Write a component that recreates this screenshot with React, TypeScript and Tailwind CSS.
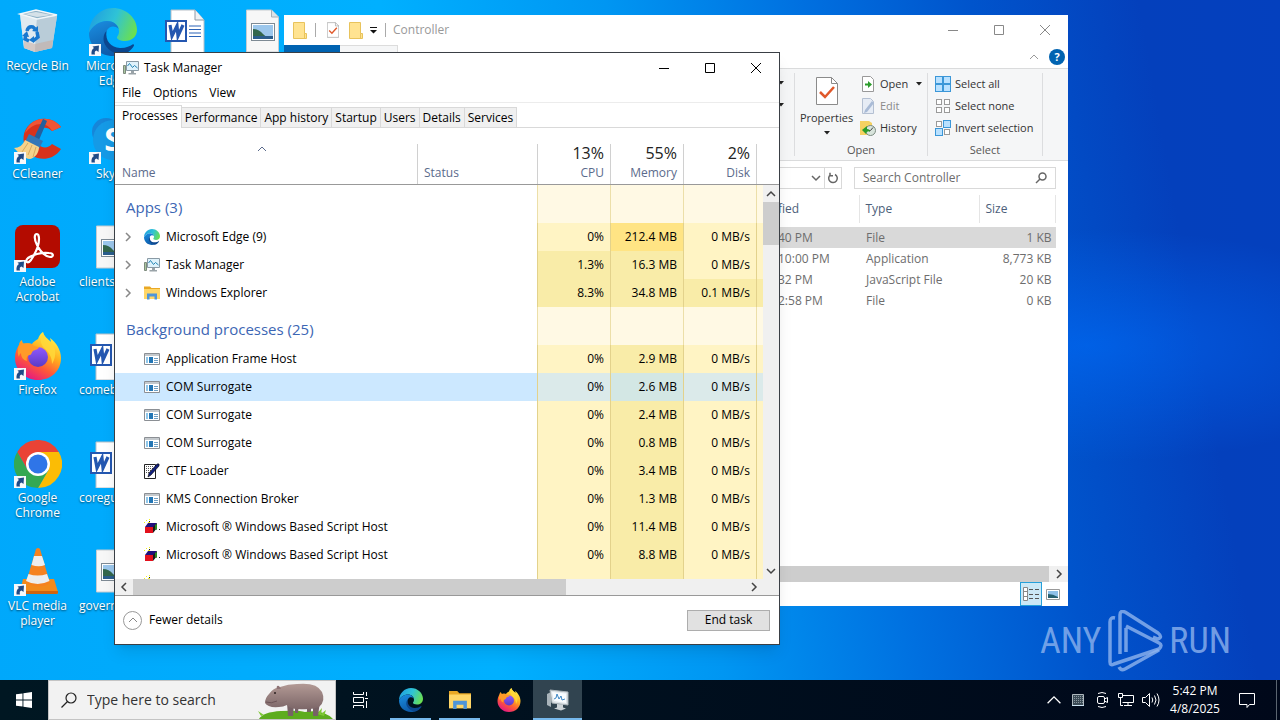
import type { ReactNode } from "react";

type IconProps = { className?: string };

/* ---------- icons ---------- */

function EdgeIcon({ className }: IconProps) {
  return (
    <svg viewBox="0 0 48 48" className={className} aria-hidden="true">
      <defs>
        <linearGradient id="edgeTop" x1="0" y1="0.3" x2="1" y2="0.6">
          <stop offset="0" stopColor="#1f9fe0" />
          <stop offset="0.5" stopColor="#2fc3d6" />
          <stop offset="1" stopColor="#6be04f" />
        </linearGradient>
        <linearGradient id="edgeLeft" x1="0" y1="0" x2="0.4" y2="1">
          <stop offset="0" stopColor="#1b8fe2" />
          <stop offset="1" stopColor="#0d5cab" />
        </linearGradient>
      </defs>
      <path d="M24 0C37 0 48 10 48 21.500c0 7.500-5.500 11.500-12 11.500-5 0-8-1.800-8-3.500 0-1.200 2-2.200 2-6C30 17.500 25 13 18 13 10 13 3 18 0 25 0 11 11 0 24 0Z" fill="url(#edgeTop)" />
      <path d="M0 25C3 18 10 13 18 13c6 0 10.500 3.500 11.700 8C26 17.500 21 18 18.500 21.500 14 28 17 38 25 43c4 2.500 7 3.500 9 2.800C31 47.500 27.500 48 24 48 10.500 48 0 38 0 25Z" fill="url(#edgeLeft)" />
      <path d="M17.500 23C16 33 22 39.500 31 40c6 .2 10-2 12.500-3.500 1.200-.6 2 .4 1.300 1.500C42 42.500 37 46.500 32 47 22 45.500 14.500 38 14.500 31c0-3.500 1.200-6.300 3-8Z" fill="#0b478f" />
    </svg>
  );
}

function RecycleIcon({ className }: IconProps) {
  return (
    <svg viewBox="0 0 48 48" className={className} aria-hidden="true">
      <path d="M6 6 43 8 38 40 21 44 10 40Z" fill="#c3d5df" />
      <path d="M6 6 23 10 21 44 10 40Z" fill="#dfeaf0" />
      <path d="M23 10 43 8 38 40 21 44Z" fill="#b9ccd8" />
      <path d="m10 33 11 3 18-4-1 8-17 4-11-4Z" fill="#c9a799" opacity="0.5" />
      <path d="m6 6 16-4 21 5-20 4Z" fill="#8fb2c7" stroke="#f2f7fa" strokeWidth="1.500" />
      <path d="m10 6 12-2 16 3-15 2Z" fill="#d5e1e8" />
      <g fill="none" stroke="#1878cf" strokeWidth="3.500">
        <path d="M13 23q1-5 6-4l2 2" />
        <path d="m23 24 1 5-5 4" />
        <path d="m15 33-4-2 1-5" />
      </g>
      <path d="m18 23 6 1 0-6ZM20 28v7l-5-3ZM8 28l5-5 2 6Z" fill="#1878cf" />
    </svg>
  );
}

function CCleanerIcon({ className }: IconProps) {
  return (
    <svg viewBox="0 0 48 48" className={className} aria-hidden="true">
      <path d="M47 11C41 3 31 1 23 4 12 8 8 18 10 27c3 13 16 19 28 14 4-2 7-5 9-8l-9-5c-4 5-11 4-14 0-4-6-2-14 4-16 4-1 7 0 10 3Z" fill="#d8321c" />
      <path d="M47 11C41 3 31 1 23 4c-6 2-10 7-12 13 5-6 10-9 16-9 5 0 9 3 11 7Z" fill="#ef5535" />
      <path d="M29 3 33 5 25 24 20 22Z" fill="#235f9e" />
      <path d="m15 18 14 7-4 8-14-7Z" fill="#3277b8" />
      <path d="M11 24 25 31c0 6-4 11-9 12C10 43 4 36 0 32c5 0 9-3 11-8Z" fill="#f5d28b" />
      <path d="m14 27-6 9M18 29l-4 10M22 31l-3 10" stroke="#d8a95e" />
    </svg>
  );
}

function AcrobatIcon({ className }: IconProps) {
  return (
    <svg viewBox="0 0 48 48" className={className} aria-hidden="true">
      <rect x="1" y="1" width="45" height="43" rx="8" fill="#b30b00" />
      <path d="M23 10c-3 0-3 5 0 11s7 11 13 12c4 0 4-4-1-4-8-1-17 2-21 5-4 4 0 6 3 2 4-6 8-15 8-21 0-3-1-5-2-5Z" fill="none" stroke="#fff" strokeWidth="2.200" />
    </svg>
  );
}

function FirefoxIcon({ className }: IconProps) {
  return (
    <svg viewBox="0 0 48 48" className={className} aria-hidden="true">
      <defs>
        <linearGradient id="foxBody" x1="0.8" y1="0.1" x2="0.3" y2="1">
          <stop offset="0" stopColor="#fff14a" />
          <stop offset="0.35" stopColor="#ffae1d" />
          <stop offset="0.65" stopColor="#ff5a36" />
          <stop offset="1" stopColor="#e31587" />
        </linearGradient>
        <linearGradient id="foxGlobe" x1="0" y1="0" x2="0" y2="1">
          <stop offset="0" stopColor="#9059ff" />
          <stop offset="1" stopColor="#5a3bc4" />
        </linearGradient>
      </defs>
      <path d="M29 0c1 5 5 7 8 10 0-2-1-3-1-4 6 4 11 12 11 20 0 13-10 22-23 22S1 38 1 26c0-6 2-10 4-13 0-2 1-4 3-5 0 2 1 3 2 4 3-1 5-1 8 0 1-2 4-4 6-5 1-3 2-5 5-7Z" fill="url(#foxBody)" />
      <circle cx="24" cy="25" r="10" fill="url(#foxGlobe)" />
      <path d="M5 13c4-2 9-2 13-1 1 2 4 3 7 3 0 2-4 3-6 4-2 2-1 4-4 4-2 1-3 3-2 6-4-1-6-4-6-8-1 1-2 2-2 4-2-4-1-9 0-12Z" fill="#ff9a28" />
      <path d="M29 0c1 5 5 7 8 10 5 6 6 14 1 22 0-7-3-12-8-16-4-4-4-11-1-16Z" fill="#ffd83a" opacity="0.85" />
    </svg>
  );
}

function ChromeIcon({ className }: IconProps) {
  return (
    <svg viewBox="0 0 48 48" className={className} aria-hidden="true">
      <path d="M3.200 12A24 24 0 0 1 44.800 12L24 12 13.600 30Z" fill="#ea4335" />
      <path d="M44.800 12A24 24 0 0 1 24 48L34.400 30 24 12Z" fill="#fbbc05" />
      <path d="M24 48A24 24 0 0 1 3.200 12L13.600 30 34.400 30Z" fill="#34a853" />
      <circle cx="24" cy="24" r="12" fill="#fff" />
      <circle cx="24" cy="24" r="9.500" fill="#2f75e8" />
    </svg>
  );
}

function VlcIcon({ className }: IconProps) {
  return (
    <svg viewBox="0 0 48 48" className={className} aria-hidden="true">
      <path d="M9 31h31l4 13q0 2-2 2H8q-2 0-2-2Z" fill="#f28a1c" />
      <path d="M6 43h38v2q0 1-2 1H8q-2 0-2-1Z" fill="#cf6410" />
      <path d="M22 1q2-2 4 0l10 34q-11 7-24 0Z" fill="#f5821f" />
      <path d="M20 8h8l3 9q-6 2.500-13.500 0ZM14.500 26q9 3 18.500 0l2.500 7q-12 6-23.500 0Z" fill="#ededed" />
    </svg>
  );
}

function SkypeIcon({ className }: IconProps) {
  return (
    <svg viewBox="0 0 48 48" className={className} aria-hidden="true">
      <circle cx="17" cy="16" r="14" fill="#1686d9" />
      <circle cx="32" cy="32" r="14" fill="#0a64c2" />
      <circle cx="24" cy="24" r="20" fill="#159ae6" />
      <text x="24" y="35" textAnchor="middle" fontSize="32" fontWeight="700" fill="#fff" fontFamily="Open Sans, sans-serif">
        S
      </text>
    </svg>
  );
}

function WordFileIcon({ className }: IconProps) {
  return (
    <svg viewBox="0 0 48 48" className={className} aria-hidden="true">
      <path d="M7 2h24l9 10v36H7Z" fill="#fff" stroke="#b8c0c8" />
      <path d="M31 2v10h9" fill="#eef1f4" stroke="#8d99a5" />
      <path d="M25 18h12M25 21.500h12M25 25h12M25 28.500h12" stroke="#2b63b7" />
      <rect x="1" y="12" width="22" height="22" fill="#2457b0" />
      <rect x="3" y="14" width="18" height="18" fill="#fff" />
      <path d="m6 17 2 11 5-10 1 10 5-11" fill="none" stroke="#2457b0" strokeWidth="3.200" />
    </svg>
  );
}

function ImageFileIcon({ className }: IconProps) {
  return (
    <svg viewBox="0 0 48 48" className={className} aria-hidden="true">
      <path d="M7.500 2h25l7 7v35h-32Z" fill="#f7f7f7" stroke="#c5cbd0" />
      <path d="M32.500 2v7h7" fill="#dfe3e6" stroke="#a8b0b6" />
      <rect x="12.500" y="15.500" width="23" height="17" fill="#fff" stroke="#7e8a94" />
      <path d="M14 17h20v14H14Z" fill="#9cc7ec" />
      <path d="M14 21q6 0 10 5t10 2v3H14Z" fill="#33664c" />
      <path d="M14 28h20v3H14Z" fill="#2a5d8c" />
    </svg>
  );
}

function ShortcutBadge() {
  return (
    <svg viewBox="0 0 12 12" className="absolute bottom-0 left-0 size-3" aria-hidden="true">
      <path d="M0 0h12v12H0Z" fill="#f6f8fb" />
      <path d="M2.500 10.500Q2 5.500 5 4L3.500 2.500 10 1.500 9.500 8 7.500 6.500Q5 7 6 10.500Z" fill="#1f4a86" />
    </svg>
  );
}

function TaskManagerIcon({ className }: IconProps) {
  return (
    <svg viewBox="0 0 16 16" className={className} aria-hidden="true">
      <path d="M.5 5.500h2v8h-2Z" fill="#a9c7a0" stroke="#7d8a7d" />
      <path d="M3.500 1.500h12v9h-12Z" fill="#dff2fb" stroke="#8a9aa5" />
      <path d="m4.500 6 2-2.500 3 4 2-2 3 2.500" fill="none" stroke="#2485b5" />
      <path d="M8 11h3v2h2v1.500H5.500V13H8Z" fill="#9aa3a8" />
    </svg>
  );
}

function FolderIcon({ className }: IconProps) {
  return (
    <svg viewBox="0 0 16 16" className={className} aria-hidden="true">
      <path d="M0 1.500h6l1.500 1.500H16v11H0Z" fill="#e9a825" />
      <path d="M0 4h16v10H0Z" fill="#ffd667" />
      <path d="M3 14.500V8.500h10v6h-2.500v-3h-5v3Z" fill="#4f95d8" />
    </svg>
  );
}

function AppIcon({ className }: IconProps) {
  return (
    <svg viewBox="0 0 16 16" className={className} aria-hidden="true">
      <path d="M.5 2.500h15v11H.5Z" fill="#fff" stroke="#8b8f94" />
      <path d="M1 3h14v2H1Z" fill="#c4c9cd" />
      <path d="M5 6h4v6H5Z" fill="#2376b5" />
      <path d="M3 6v6" stroke="#8fc7ea" strokeWidth="2" />
      <path d="M10 7.500h4M10 9.500h4M10 11.500h4" stroke="#6e9fc4" />
    </svg>
  );
}

function CtfIcon({ className }: IconProps) {
  return (
    <svg viewBox="0 0 16 16" className={className} aria-hidden="true">
      <path d="M.5 1.500h11v14H.5Z" fill="#fff" stroke="#222" />
      <path d="M2 3.500h8M2 5.500h7M2 7.500h5M2 9.500h4" stroke="#555" strokeDasharray="1 1" />
      <path d="M13 1q3-1 2 2l-8 9-3 2 1-4Z" fill="#12207c" stroke="#000" strokeWidth="0.600" />
    </svg>
  );
}

function ScriptIcon({ className }: IconProps) {
  return (
    <svg viewBox="0 0 16 16" className={className} aria-hidden="true">
      <path d="M2 1.500h1M5 .5h1M0 3.500h1M4 3.500h2" stroke="#f2ee1c" />
      <path d="M5 2.500h1M15 10.500h1" stroke="#222" />
      <path d="m1 8 3-4h9l-3 4Z" fill="#20107c" />
      <path d="M1 8h8v6H1Z" fill="#e3101c" />
      <path d="m9 8 4-4v5l-4 5Z" fill="#1b1b1b" />
      <path d="M11 6v4l2 1V5Z" fill="#2c8c26" />
    </svg>
  );
}

function Chevron({ dir, className }: { dir: "up" | "down" | "left" | "right"; className?: string }) {
  const paths = { up: "M1 7l4-4 4 4", down: "M1 3l4 4 4-4", left: "M7 1L3 5l4 4", right: "M3 1l4 4-4 4" };
  return (
    <svg viewBox="0 0 10 10" className={className} fill="none" stroke="currentColor" aria-hidden="true">
      <path d={paths[dir]} />
    </svg>
  );
}

function Caret() {
  return (
    <svg viewBox="0 0 6 4" className="h-1 w-1.5 shrink-0" aria-hidden="true">
      <path d="M0 0h6L3 3.500Z" fill="#222" />
    </svg>
  );
}

function WindowControls({ className = "" }: IconProps) {
  const glyphs = [
    { label: "Minimize", d: "M0 5.500h10" },
    { label: "Maximize", d: "M.5.500h9v9h-9Z" },
    { label: "Close", d: "m0 0 10 10M10 0 0 10" },
  ];
  return (
    <div className={`flex h-full ${className}`}>
      {glyphs.map((g) => (
        <button key={g.label} aria-label={g.label} className="flex h-full w-[46px] items-center justify-center">
          <svg viewBox="0 0 10 10" className="size-[10px] overflow-visible" fill="none" stroke="currentColor">
            <path d={g.d} />
          </svg>
        </button>
      ))}
    </div>
  );
}

/* ---------- desktop ---------- */

type Shortcut = {
  label: string;
  icon: (props: IconProps) => ReactNode;
  shortcut?: boolean;
  clipped?: boolean;
};

const desktopItems: Shortcut[] = [
  { label: "Recycle Bin", icon: RecycleIcon },
  { label: "CCleaner", icon: CCleanerIcon, shortcut: true },
  { label: "Adobe Acrobat", icon: AcrobatIcon, shortcut: true },
  { label: "Firefox", icon: FirefoxIcon, shortcut: true },
  { label: "Google Chrome", icon: ChromeIcon, shortcut: true },
  { label: "VLC media player", icon: VlcIcon, shortcut: true },
  { label: "Microsoft Edge", icon: EdgeIcon, shortcut: true },
  { label: "Skype", icon: SkypeIcon, shortcut: true },
  { label: "clients", icon: ImageFileIcon, clipped: true },
  { label: "comeb", icon: WordFileIcon, clipped: true },
  { label: "coregu", icon: WordFileIcon, clipped: true },
  { label: "govern", icon: ImageFileIcon, clipped: true },
  { label: "", icon: WordFileIcon },
];

function DesktopItem({ item }: { item: Shortcut }) {
  const Icon = item.icon;
  return (
    <div className="flex flex-col items-center pt-2">
      <div className="relative size-12">
        <Icon className="size-12" />
        {item.shortcut && <ShortcutBadge />}
      </div>
      <span
        className={`mt-0.5 w-full px-1 leading-[15px] text-white [text-shadow:0_1px_2px_rgba(0,0,0,0.6)] ${
          item.clipped ? "text-left" : "text-center"
        }`}
      >
        {item.label}
      </span>
    </div>
  );
}

function Desktop() {
  return (
    <div className="grid w-fit auto-cols-[75px] grid-flow-col grid-rows-[repeat(6,108px)]">
      {desktopItems.map((item) => (
        <DesktopItem key={item.label} item={item} />
      ))}
      <div className="col-start-4 row-start-1">
        <DesktopItem item={{ label: "", icon: ImageFileIcon }} />
      </div>
    </div>
  );
}

/* ---------- file explorer ---------- */

const files = [
  { date: "40 PM", type: "File", size: "1 KB" },
  { date: "10:00 PM", type: "Application", size: "8,773 KB" },
  { date: "32 PM", type: "JavaScript File", size: "20 KB" },
  { date: "2:58 PM", type: "File", size: "0 KB" },
];

function SelectIcon({ filled }: { filled: boolean[] }) {
  const spots = [
    [0.5, 0.5],
    [8.5, 0.5],
    [0.5, 8.5],
    [8.5, 8.5],
  ];
  return (
    <svg viewBox="0 0 16 16" className="size-4" aria-hidden="true">
      {spots.map(([x, y], i) =>
        filled[i] ? (
          <rect key={i} x={x} y={y} width="7" height="7" fill="#b9e1ff" stroke="#3b97d8" />
        ) : (
          <rect key={i} x={x + 1} y={y + 1} width="5" height="5" fill="#fff" stroke="#9a9a9a" />
        )
      )}
    </svg>
  );
}

function PropertiesIcon({ className }: IconProps) {
  return (
    <svg viewBox="0 0 22 28" className={className} aria-hidden="true">
      <path d="M.5.500h15l6 6v21H.5Z" fill="#fff" stroke="#8b8b8b" />
      <path d="M15.500.500v6h6" fill="none" stroke="#8b8b8b" />
      <path d="m4 15 5 5 9-10" fill="none" stroke="#e0582a" strokeWidth="2.500" />
    </svg>
  );
}

function SmallFolder() {
  return (
    <svg viewBox="0 0 14 17" className="h-[17px] w-3.5" aria-hidden="true">
      <path d="M.5.500h11v11h2v5H.5Z" fill="#ffe391" stroke="#e8c35c" />
      <path d="M11.500 11.500v5" stroke="#e8c35c" />
    </svg>
  );
}

function Explorer() {
  return (
    <section
      aria-label="Controller"
      className="absolute left-[284px] top-[15px] flex h-[591px] w-[784px] flex-col bg-white text-[#444]"
    >
      <header className="flex h-[30px] shrink-0 items-center pl-[9px] text-[#999]">
        <SmallFolder />
        <span className="ml-2 h-3.5 w-px bg-[#aaa]" />
        <PropertiesIcon className="ml-[11px] h-4 w-3" />
        <span className="ml-2.5">
          <SmallFolder />
        </span>
        <svg viewBox="0 0 7 7" className="ml-[7px] size-[7px]" aria-hidden="true">
          <path d="M0 0h7v1H0ZM0 3h7L3.500 6.500Z" fill="#111" />
        </svg>
        <span className="ml-2 h-3.5 w-px bg-[#aaa]" />
        <h2 className="ml-[7px] grow">Controller</h2>
        <WindowControls className="text-[#888]" />
      </header>
      <div className="flex h-6 shrink-0 items-center border-b border-[#dadbdc]">
        <div className="h-full w-14 bg-[#0063b1]" />
        <div className="h-full w-[58px] border-r border-t border-[#dcdcdc] bg-[#f5f6f7]" />
        <span className="grow" />
        <Chevron dir="up" className="size-2.5 text-[#999]" />
        <button aria-label="Help" className="ml-2.5 mr-[3px] size-4 rounded-full bg-[#0063b1] text-[11px] font-bold leading-4 text-white">
          ?
        </button>
      </div>
      <div className="flex h-[92px] shrink-0 justify-end border-b border-[#dadbdc] bg-[#f5f6f7] text-[11px] text-[#333]">
        <div className="my-1 flex flex-col gap-[18px] border-r border-[#dcdddf] pr-2.5 pt-2">
          <Caret />
          <Caret />
        </div>
        <div className="my-1 flex w-[133px] flex-col justify-between border-r border-[#dcdddf]">
          <div className="flex">
            <button className="flex w-[63px] flex-col items-center pt-1">
              <PropertiesIcon className="h-7 w-[22px]" />
              <span className="mb-1 mt-1 leading-[18px]">Properties</span>
              <Caret />
            </button>
            <div className="flex flex-col gap-1.5 pl-0.5 pt-[3px]">
              <button className="flex h-4 items-center gap-1">
                <svg viewBox="0 0 16 16" className="size-4" aria-hidden="true">
                  <path d="M2.500.500h8l3 3v12h-11Z" fill="#fff" stroke="#999" />
                  <path d="M5 7.500h3V5l4 3.500L8 12V9.500H5Z" fill="#2b9c2b" />
                </svg>
                Open
                <span className="ml-1">
                  <Caret />
                </span>
              </button>
              <button className="flex h-4 items-center gap-1 text-[#8a8a8a]" disabled>
                <svg viewBox="0 0 16 16" className="size-4" aria-hidden="true">
                  <path d="M2.500.500h8l3 3v12h-11Z" fill="#e6ecf5" stroke="#b4c0d2" />
                  <path d="m12 3 2 2-7 9-3 1 1-3Z" fill="#a9bbd6" />
                </svg>
                Edit
              </button>
              <button className="flex h-4 items-center gap-1">
                <svg viewBox="0 0 16 16" className="size-4" aria-hidden="true">
                  <path d="M0 1h9l3 2v12H0Z" fill="#f5d162" />
                  <circle cx="10.500" cy="10.500" r="5" fill="#d8e4dc" stroke="#7b8b80" />
                  <path d="M8 10.500h2.500L13 7.500" fill="none" stroke="#444" />
                  <path d="m2 10 5-4v3q3 0 3 3-3-2-4 2Z" fill="#2b9c2b" />
                </svg>
                History
              </button>
            </div>
          </div>
          <span className="text-center leading-3 text-[#555]">Open</span>
        </div>
        <div className="my-1 mr-[25px] flex w-[115px] flex-col justify-between border-r border-[#dcdddf]">
          <div className="flex flex-col gap-1.5 pl-[7px] pt-[3px]">
            <button className="flex h-4 items-center gap-1 whitespace-nowrap">
              <SelectIcon filled={[true, true, true, true]} />
              Select all
            </button>
            <button className="flex h-4 items-center gap-1 whitespace-nowrap">
              <SelectIcon filled={[false, false, false, false]} />
              Select none
            </button>
            <button className="flex h-4 items-center gap-1 whitespace-nowrap">
              <SelectIcon filled={[false, true, true, false]} />
              Invert selection
            </button>
          </div>
          <span className="text-center leading-3 text-[#555]">Select</span>
        </div>
      </div>
      <div className="flex h-[34px] shrink-0 items-center justify-end gap-3 pr-3">
        <div className="flex h-[22px] grow items-center justify-end border border-[#d9d9d9]">
          <Chevron dir="down" className="mr-[3px] size-2.5 stroke-[1.5] text-[#666]" />
          <button aria-label="Refresh" className="flex h-full w-[17px] items-center justify-center border-l border-[#d9d9d9]">
            <svg viewBox="0 0 12 12" className="size-3" fill="none" stroke="#666" strokeWidth="1.500" aria-hidden="true">
              <path d="M8 2.500a4.300 4.300 0 1 1-4.500.3M3 .7v3h3" />
            </svg>
          </button>
        </div>
        <div className="flex h-[22px] w-[202px] items-center border border-[#d9d9d9] px-2">
          <input aria-label="Search Controller" placeholder="Search Controller" className="w-full min-w-0 outline-none placeholder:text-[#6d6d6d]" />
          <svg viewBox="0 0 12 12" className="size-3 shrink-0" fill="none" stroke="#666" strokeWidth="1.500" aria-hidden="true">
            <circle cx="7.500" cy="4.500" r="3.500" />
            <path d="M5 7 1 11" />
          </svg>
        </div>
      </div>
      <div className="flex grow flex-col items-end pr-3">
        <table className="w-[278px] table-fixed border-collapse text-left text-[#6d6d6d]">
          <colgroup>
            <col className="w-[81px]" />
            <col className="w-[120px]" />
            <col />
          </colgroup>
          <thead>
            <tr className="h-7 text-[#4c607a]">
              <th className="p-0 font-normal">fied</th>
              <th className="border-l border-[#e5e5e5] p-0 pl-1.5 font-normal">Type</th>
              <th className="border-x border-[#e5e5e5] p-0 pl-1.5 font-normal">Size</th>
            </tr>
          </thead>
          <tbody>
            <tr className="h-1" />
            {files.map((f, i) => (
              <tr key={f.date} className={`h-[21px] ${i === 0 ? "bg-[#d9d9d9]" : ""}`}>
                <td className="whitespace-nowrap p-0">{f.date}</td>
                <td className="whitespace-nowrap p-0 pl-[7px]">{f.type}</td>
                <td className="whitespace-nowrap p-0 pr-1 text-right">{f.size}</td>
              </tr>
            ))}
          </tbody>
        </table>
      </div>
      <div className="flex h-4 shrink-0 items-center bg-[#f0f0f0]">
        <div className="h-full grow bg-[#cdcdcd]" />
        <button aria-label="Scroll right" className="flex w-[19px] items-center justify-center text-[#444]">
          <Chevron dir="right" className="size-2.5 stroke-[1.5]" />
        </button>
      </div>
      <div className="flex h-6 shrink-0 items-center justify-end pr-1">
        <button aria-label="Details view" className="flex h-6 w-[22px] items-center justify-center border border-[#26a0da] bg-[#cbe8f6]">
          <svg viewBox="0 0 16 14" className="h-3.5 w-4" aria-hidden="true">
            <path d="M.5.500h4v13h-4ZM.5 4.500h4M.5 9.500h4" fill="#fff" stroke="#888" />
            <path d="M6 2.500h10M6 7.500h10M6 11.500h10" stroke="#555" strokeDasharray="4 2" />
          </svg>
        </button>
        <button aria-label="Thumbnail view" className="flex h-6 w-[22px] items-center justify-center">
          <svg viewBox="0 0 14 11" className="h-[11px] w-3.5" aria-hidden="true">
            <path d="M.5.500h13v10H.5Z" fill="#fff" stroke="#999" />
            <path d="M2 2h10v7H2Z" fill="#8fc0e8" />
            <path d="M2 5q5 0 10 3v1H2Z" fill="#265f6f" />
          </svg>
        </button>
      </div>
    </section>
  );
}

/* ---------- task manager ---------- */

type Process = {
  name: string;
  icon: (props: IconProps) => ReactNode;
  cpu: string;
  memory: string;
  disk: string;
  expandable?: boolean;
  selected?: boolean;
};

const apps: Process[] = [
  { name: "Microsoft Edge (9)", icon: EdgeIcon, cpu: "0%", memory: "212.4 MB", disk: "0 MB/s", expandable: true },
  { name: "Task Manager", icon: TaskManagerIcon, cpu: "1.3%", memory: "16.3 MB", disk: "0 MB/s", expandable: true },
  { name: "Windows Explorer", icon: FolderIcon, cpu: "8.3%", memory: "34.8 MB", disk: "0.1 MB/s", expandable: true },
];

const background: Process[] = [
  { name: "Application Frame Host", icon: AppIcon, cpu: "0%", memory: "2.9 MB", disk: "0 MB/s" },
  { name: "COM Surrogate", icon: AppIcon, cpu: "0%", memory: "2.6 MB", disk: "0 MB/s", selected: true },
  { name: "COM Surrogate", icon: AppIcon, cpu: "0%", memory: "2.4 MB", disk: "0 MB/s" },
  { name: "COM Surrogate", icon: AppIcon, cpu: "0%", memory: "0.8 MB", disk: "0 MB/s" },
  { name: "CTF Loader", icon: CtfIcon, cpu: "0%", memory: "3.4 MB", disk: "0 MB/s" },
  { name: "KMS Connection Broker", icon: AppIcon, cpu: "0%", memory: "1.3 MB", disk: "0 MB/s" },
  { name: "Microsoft ® Windows Based Script Host", icon: ScriptIcon, cpu: "0%", memory: "11.4 MB", disk: "0 MB/s" },
  { name: "Microsoft ® Windows Based Script Host", icon: ScriptIcon, cpu: "0%", memory: "8.8 MB", disk: "0 MB/s" },
  { name: "", icon: ScriptIcon, cpu: "", memory: "", disk: "" },
];

const tabs = ["Processes", "Performance", "App history", "Startup", "Users", "Details", "Services"];
const menus = ["File", "Options", "View"];

function heat(value: string) {
  const n = parseFloat(value);
  if (value.endsWith("MB")) return n > 100 ? "bg-[#ffe484]" : "bg-[#f9eca8]";
  return n > 0 ? "bg-[#f9eca8]" : "bg-[#fff4c4]";
}

function SectionRow({ title }: { title: string }) {
  return (
    <tr className="h-[38px]">
      <th colSpan={2} scope="rowgroup" className="pb-0 pl-[11px] pt-1.5 text-left text-[15px] font-normal text-[#3c66b4]">
        {title}
      </th>
      <td className="border-l border-[#ecdfa9] bg-[#fff9e4]" />
      <td className="border-l border-[#ecdfa9] bg-[#fff9e4]" />
      <td className="border-x border-[#ecdfa9] bg-[#fff9e4]" />
      <td className="bg-[#fff9e4]" />
    </tr>
  );
}

function ProcessRow({ process }: { process: Process }) {
  const Icon = process.icon;
  const cell = "border-[#e3d28c] pr-1.5 text-right";
  const sel = process.selected;
  return (
    <tr className={`h-7 whitespace-nowrap ${sel ? "bg-[#cce8ff]" : ""}`}>
      <td colSpan={2}>
        <div className="flex items-center pl-2">
          <span className="flex w-[21px] text-[#888]">
            {process.expandable && <Chevron dir="right" className="size-2.5 stroke-[1.5]" />}
          </span>
          <Icon className="mr-1.5 size-4" />
          {process.name}
        </div>
      </td>
      <td className={`${cell} border-l ${sel ? "bg-[#dbeaea]" : heat(process.cpu)}`}>{process.cpu}</td>
      <td className={`${cell} border-l ${sel ? "bg-[#d3e7e4]" : heat(process.memory || "MB")}`}>{process.memory}</td>
      <td className={`${cell} border-x ${sel ? "bg-[#dbeaea]" : heat(process.disk)}`}>{process.disk}</td>
      <td className={sel ? "bg-[#dbeaea]" : heat(process.disk)} />
    </tr>
  );
}

function ProcessTable() {
  const usage = [
    ["13%", "CPU"],
    ["55%", "Memory"],
    ["2%", "Disk"],
  ];
  return (
    <div className="flex flex-col">
      <div className="h-[451px] overflow-hidden">
        <table className="w-full table-fixed border-separate border-spacing-0">
          <colgroup>
            <col />
            <col className="w-[120px]" />
            <col className="w-[73px]" />
            <col className="w-[73px]" />
            <col className="w-[74px]" />
            <col className="w-[22px]" />
          </colgroup>
          <thead>
            <tr className="text-left align-bottom text-[#5b6b8c]">
              <th className="h-[57px] border-b border-[#999] p-0 font-normal">
                <div className="flex h-10 flex-col justify-between pb-[3px] pl-[7px]">
                  <Chevron dir="up" className="mr-4 size-2.5 self-center" />
                  <span className="leading-4">Name</span>
                </div>
              </th>
              <th className="border-b border-[#999] p-0 font-normal">
                <div className="flex h-10 items-end border-l border-[#d0d0d0] pb-[3px] pl-1.5 leading-4">Status</div>
              </th>
              {usage.map(([pct, label]) => (
                <th key={label} className="border-b border-[#999] p-0 text-right font-normal">
                  <div
                    className={`flex h-10 flex-col justify-end border-l border-[#d0d0d0] pb-[3px] pr-1.5 ${
                      label === "Disk" ? "border-r" : ""
                    }`}
                  >
                    <span className="mb-0.5 text-base leading-5 text-[#222]">{pct}</span>
                    <span className="leading-4">{label}</span>
                  </div>
                </th>
              ))}
              <th className="border-b border-[#999]" />
            </tr>
          </thead>
          <tbody>
            <SectionRow title="Apps (3)" />
            {apps.map((p) => (
              <ProcessRow key={p.name} process={p} />
            ))}
            <SectionRow title="Background processes (25)" />
            {background.map((p, i) => (
              <ProcessRow key={i} process={p} />
            ))}
          </tbody>
        </table>
      </div>
      <div className="flex h-[17px] items-center border-b border-[#999] bg-[#f0f0f0] pr-4 text-[#444]">
        <button aria-label="Scroll left" className="flex w-[18px] items-center justify-center">
          <Chevron dir="left" className="size-2.5 stroke-[1.5]" />
        </button>
        <div className="h-full w-[433px] bg-[#cdcdcd]" />
        <span className="grow" />
        <button aria-label="Scroll right" className="flex w-[18px] items-center justify-center">
          <Chevron dir="right" className="size-2.5 stroke-[1.5]" />
        </button>
      </div>
    </div>
  );
}

function TaskManager() {
  return (
    <section
      aria-label="Task Manager"
      className="absolute left-[114px] top-[52px] flex w-[666px] flex-col border border-[#3a3f45] bg-white text-black shadow-lg"
    >
      <header className="flex h-[30px] items-center pl-2">
        <TaskManagerIcon className="size-4" />
        <h1 className="ml-[5px] grow">Task Manager</h1>
        <WindowControls />
      </header>
      <nav className="flex h-5 items-center gap-3 border-b border-[#ececec] pl-[7px]">
        {menus.map((m) => (
          <button key={m}>{m}</button>
        ))}
      </nav>
      <div role="tablist" className="flex h-[25px] items-end border-b border-[#d9d9d9]">
        {tabs.map((t, i) => (
          <button
            key={t}
            role="tab"
            aria-selected={i === 0}
            className={
              i === 0
                ? "-mb-px h-[23px] border-r border-t border-[#d9d9d9] bg-white pb-0.5 pl-[7px] pr-[3px]"
                : "h-5 border-r border-t border-[#d9d9d9] bg-[#f0f0f0] px-[3px]"
            }
          >
            {t}
          </button>
        ))}
      </div>
      <div className="relative">
        <ProcessTable />
        <div className="absolute bottom-[17px] right-0 top-[57px] flex w-4 flex-col items-center bg-[#f0f0f0] text-[#444]">
          <button aria-label="Scroll up" className="flex h-[17px] items-center">
            <Chevron dir="up" className="size-2.5 stroke-[1.5]" />
          </button>
          <div className="h-[43px] w-full bg-[#cdcdcd]" />
          <span className="grow" />
          <button aria-label="Scroll down" className="flex h-[17px] items-center">
            <Chevron dir="down" className="size-2.5 stroke-[1.5]" />
          </button>
        </div>
      </div>
      <footer className="flex h-12 items-center justify-between pl-2 pr-[9px]">
        <button className="flex items-center gap-[7px]">
          <span className="flex size-[19px] items-center justify-center rounded-full border border-[#999] text-[#888]">
            <Chevron dir="up" className="size-2.5" />
          </span>
          Fewer details
        </button>
        <button className="h-[21px] w-[83px] border border-[#adadad] bg-[#e1e1e1]">End task</button>
      </footer>
    </section>
  );
}

/* ---------- watermark ---------- */

function Watermark() {
  return (
    <div className="absolute bottom-2 right-[49px] mb-10 flex items-center gap-1.5 font-['Liberation_Sans_Narrow','Roboto_Condensed','Roboto',sans-serif] text-[36px] leading-none text-[#8fb4ee]/80">
      <span>ANY</span>
      <svg viewBox="0 0 56 62" className="h-[62px] w-14" fill="none" stroke="currentColor" strokeWidth="3.500" strokeLinejoin="round" aria-hidden="true">
        <path d="M8 8Q3 7 3 12v40q0 4 4 2l45-15q4-4 0-6L19 16" />
        <path d="M13 44V5q0-5 5-3l33 21q5 4 0 6l-5-2" />
        <path d="M12 57q2 4 6 2l34-19M19 18v24" />
      </svg>
      <span>RUN</span>
    </div>
  );
}

/* ---------- taskbar ---------- */

function Hippo() {
  return (
    <svg viewBox="0 0 78 38" className="h-[38px] w-[78px] shrink-0" aria-hidden="true">
      <defs>
        <linearGradient id="hide" x1="0" y1="0" x2="0" y2="1">
          <stop offset="0" stopColor="#b39a95" />
          <stop offset="1" stopColor="#7c6668" />
        </linearGradient>
      </defs>
      <path d="M2 38q4-7 22-8t24 1q18-3 28 7Z" fill="#5dac1e" />
      <path d="M60 33q3-4 5-6l-1 6 5-4-2 6ZM4 35l-3-5 6 4Z" fill="#7cc832" />
      <path d="M30 22h7l-1 13h-5ZM56 20h7l-2 15h-5ZM38 22h4l-1 10h-3ZM50 22h4v9h-4Z" fill="#776266" />
      <path d="M12 13q4-6 11-7 8-3 17-3 20-2 25 8 4 9-3 15-8 3-21 2-8 0-11-4-4 2-8 2Q11 27 8 22q0-5 4-9Z" fill="url(#hide)" />
      <path d="M20 8q-1-4 2-3l2 3Z" fill="#8f7375" />
      <circle cx="18" cy="12" r="1" fill="#2b2020" />
      <path d="M9 21q5 2 11-1" fill="none" stroke="#6b5356" />
    </svg>
  );
}

function Taskbar() {
  const pinned = [
    { label: "Microsoft Edge", icon: EdgeIcon, open: true },
    { label: "File Explorer", icon: FolderIcon, open: true },
    { label: "Firefox", icon: FirefoxIcon, open: false },
  ];
  return (
    <footer className="absolute inset-x-0 bottom-0 flex h-10 items-center bg-linear-to-r from-[#001722] to-[#00081a] text-white">
      <button aria-label="Start" className="flex h-full w-12 items-center justify-center">
        <svg viewBox="0 0 16 16" className="size-4" fill="#fff" aria-hidden="true">
          <path d="M0 2.300 6.500 1.400V7.600H0ZM7.400 1.300 16 0V7.600H7.400ZM0 8.400H6.500V14.600L0 13.700ZM7.400 8.400H16V16L7.400 14.700Z" />
        </svg>
      </button>
      <div className="flex h-full w-72 items-center border border-[#c4c4c4] bg-[#f2f2f2] pl-3">
        <svg viewBox="0 0 16 16" className="size-4 shrink-0" fill="none" stroke="#222" strokeWidth="1.200" aria-hidden="true">
          <circle cx="10" cy="6" r="5" />
          <path d="M6.500 9.500.5 15.500" />
        </svg>
        <input
          aria-label="Type here to search"
          placeholder="Type here to search"
          className="ml-2.5 min-w-0 grow text-sm outline-none placeholder:text-[#333]"
        />
        <Hippo />
      </div>
      <button aria-label="Task View" className="flex h-full w-[50px] items-center justify-center">
        <svg viewBox="0 0 16 16" className="size-4" fill="none" stroke="#fff" aria-hidden="true">
          <path d="M.5 0v2.500h10V0M.5 5.500h10v5H.5ZM.5 16v-2.500h10V16M13.500 0v4M13.500 9v7M12 6.500h3" />
        </svg>
      </button>
      {pinned.map(({ label, icon: Icon, open }) => (
        <button key={label} aria-label={label} className="relative flex h-full w-[49px] items-center justify-center">
          <Icon className={label === "File Explorer" ? "size-[22px]" : "size-6"} />
          {open && <span className="absolute inset-x-1 bottom-0 h-0.5 bg-[#76b9ed]" />}
        </button>
      ))}
      <button aria-label="Task Manager" className="relative flex h-full w-[49px] items-center justify-center bg-[#314450]">
        <svg viewBox="0 0 24 24" className="size-6" aria-hidden="true">
          <path d="M1 6 5 4v15l-4-2Z" fill="#a9b4ba" />
          <path d="m4 2 18 2v13L6 15Z" fill="#dfe5e9" stroke="#aab3b8" />
          <path d="m6 4 14 1.500V15L8 13Z" fill="#f8fcff" />
          <path d="m8 11 2-1 1-4 2 5 2-3 1 4 3-1" fill="none" stroke="#3c86c4" />
          <path d="m11 16 6 .5v3l3 1-5 2-7-2 3-1Z" fill="#ccd3d7" />
        </svg>
        <span className="absolute inset-x-0 bottom-0 h-0.5 bg-[#76b9ed]" />
      </button>
      <span className="grow" />
      <div className="flex items-center gap-2">
        <Chevron dir="up" className="size-4 stroke-[0.8]" />
        <svg viewBox="0 0 16 16" className="size-4" aria-hidden="true">
          <path d="M2.500 2.500h11v11h-11Z" fill="#3b4b56" stroke="#aeb8be" />
          <path d="M4 4.500h9M4 6.500h9M4 8.500h9M4 10.500h9" stroke="#8a969e" strokeDasharray="1 1" />
          <path d="M2 13.500h12" stroke="#cfe6f5" />
        </svg>
        <svg viewBox="0 0 16 16" className="size-4" fill="none" stroke="#fff" aria-hidden="true">
          <rect x="3.500" y="4.500" width="7" height="7" rx="1.500" />
          <path d="m10.500 7 3-1.500v5l-3-1.500M4 1.500q4-2 8 0M4 14.500q4 2 8 0" />
        </svg>
        <svg viewBox="0 0 16 16" className="size-4" fill="none" stroke="#fff" aria-hidden="true">
          <path d="M4.500 3.500h11v7h-11M10 10.500v3M6 13.500h8M.5 1.500h4v4h-4ZM2.500 5.500v8H5" />
        </svg>
        <svg viewBox="0 0 18 16" className="h-4 w-[18px]" fill="none" stroke="#fff" aria-hidden="true">
          <path d="M.5 5.500h3l4-4v13l-4-4h-3ZM10 5.500q1.500 2.500 0 5M12.500 3.500q3 4.500 0 9M15 1.500q4 6.500 0 13" />
        </svg>
      </div>
      <time className="w-[70px] text-center leading-[18px]">
        5:42 PM
        <br />
        4/8/2025
      </time>
      <button aria-label="Notifications" className="ml-2 mr-5 flex size-[18px] items-center justify-center">
        <svg viewBox="0 0 16 16" className="size-4" fill="none" stroke="#fff" aria-hidden="true">
          <path d="M.5 1.500h15v11h-5l-2.500 3v-3h-7.500Z" />
        </svg>
      </button>
      <span className="mr-[3px] h-full w-px bg-[#5b6570]" />
    </footer>
  );
}

export default function App() {
  return (
    <main className="relative h-screen w-full overflow-hidden bg-[radial-gradient(ellipse_at_85%_48%,rgba(0,112,255,0.55)_0%,transparent_22%),linear-gradient(80deg,#00a8fb_0%,#00b0ff_36%,#0096f2_52%,#0070e0_66%,#0054cc_78%,#0440bc_90%,#0440be_100%)] font-['Open_Sans','Noto_Sans',sans-serif] text-xs">
      <Desktop />
      <Explorer />
      <TaskManager />
      <Watermark />
      <Taskbar />
    </main>
  );
}
